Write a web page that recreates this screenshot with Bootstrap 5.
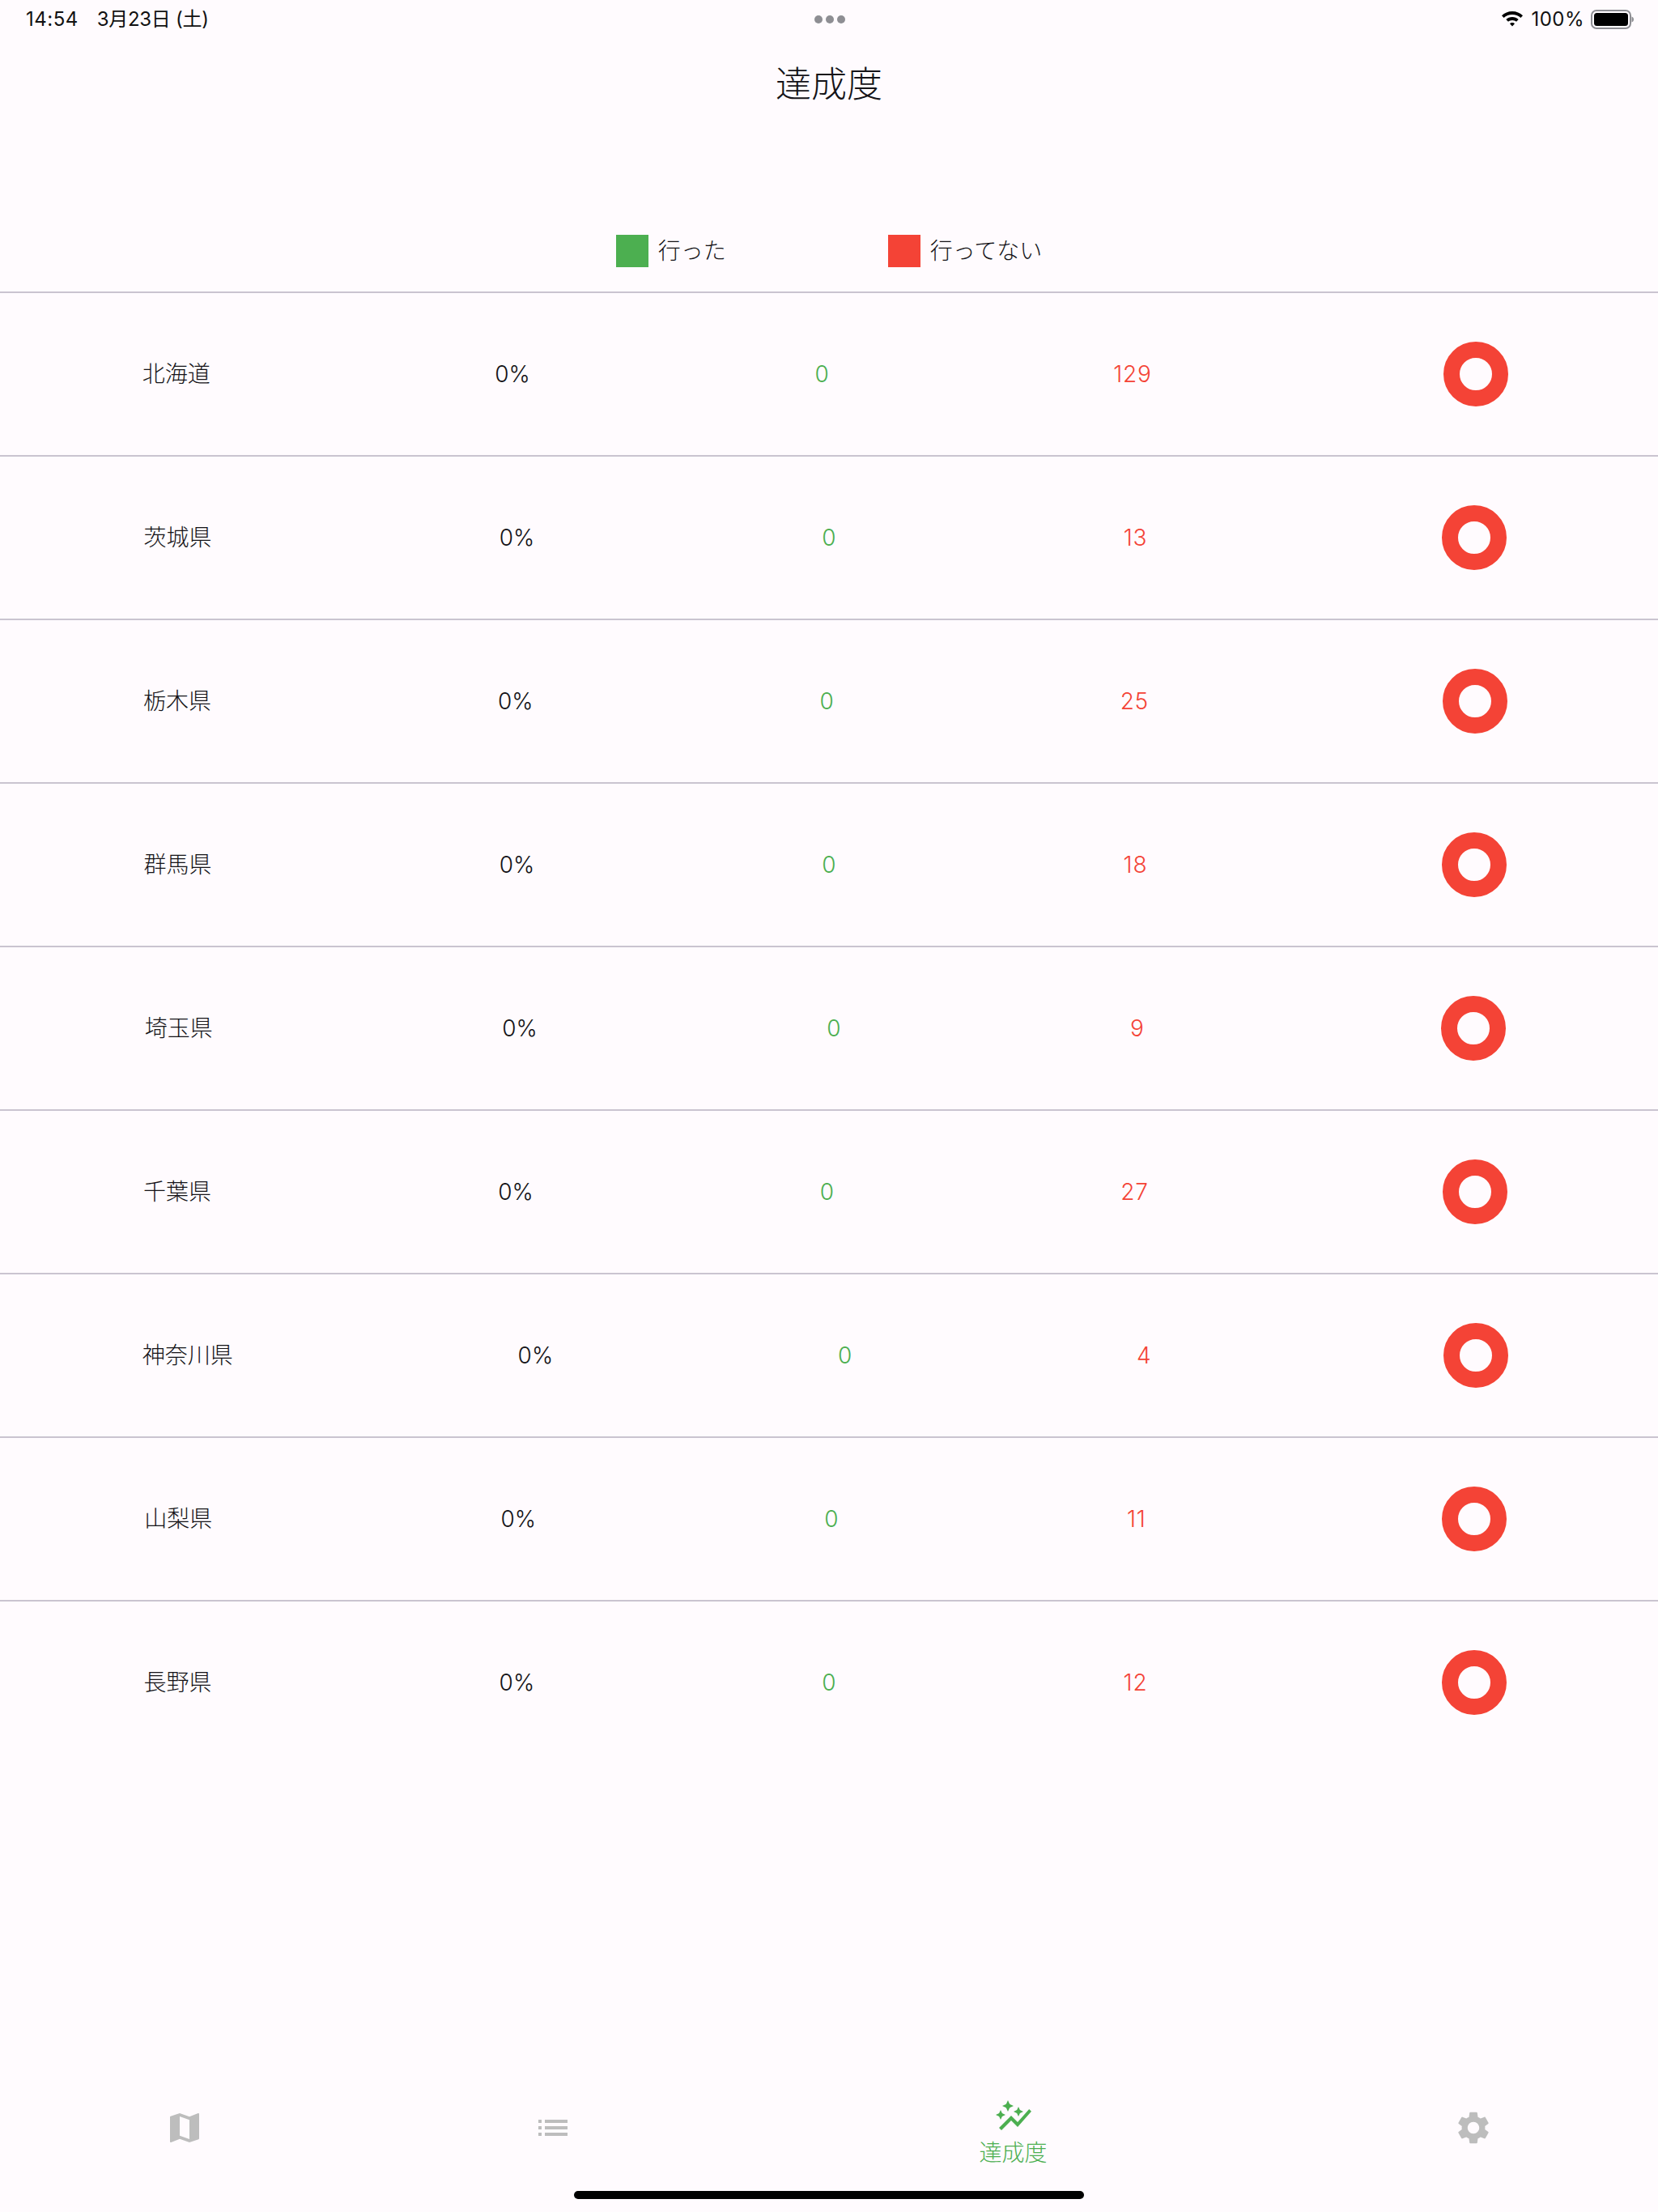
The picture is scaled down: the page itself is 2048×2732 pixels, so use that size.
<!DOCTYPE html>
<html lang="ja">
<head>
<meta charset="utf-8">
<title>達成度</title>
<link href="https://cdn.jsdelivr.net/npm/bootstrap@5.3.0/dist/css/bootstrap.min.css" rel="stylesheet">
<style>
html, body { background: #fffbfe; }
body { font-family: "Inter", "Noto Sans CJK JP", sans-serif; color: #141317; width: 2048px; }
.screen { min-height: 2732px; }
.status-bar { height: 48px; padding: 0 30px 0 32px; font-size: 24px; color: #111; }
.status-time { letter-spacing: 0.5px; }
.status-date { margin-left: 23px; letter-spacing: -0.3px; }
.status-pct { margin: 0 8px 0 9px; letter-spacing: 0.5px; }
.status-left, .status-right { width: 300px; }
.tri-dot { width: 10px; height: 10px; border-radius: 50%; background: #8e8e93; }
.page-title { height: 112px; font-size: 44px; font-weight: 300; }
.legend-bar { padding-top: 130px; padding-bottom: 30px; gap: 200px; font-size: 28px; font-weight: 300; line-height: 40px; }
.legend-item { gap: 12px; }
.swatch { width: 40px; height: 40px; }
.swatch-go { background: #4caf50; }
.swatch-no { background: #f44336; }
.stat-row { height: 202px; border-top: 2px solid #cac4d0; font-size: 28px; font-weight: 300; }
.val-go { color: #4caf50; }
.val-no { color: #f44336; letter-spacing: 0.8px; }
.ring-box { width: 98px; }
.ring { width: 80px; height: 80px; border-radius: 50%; border: 20px solid #f44336; }
.tab-bar { height: 120px; }
.tab-cell { flex: 2 1 0; color: #bdbdbd; }
.tab-cell.tab-active { flex: 3 1 0; color: #4caf50; padding-top: 14px; }
.tab-cell svg { width: 48px; height: 48px; fill: currentColor; display: block; }
.tab-label { font-size: 28px; font-weight: 300; line-height: 42px; }
.home-zone { height: 44px; padding-top: 18px; }
.home-bar { width: 630px; height: 10px; border-radius: 5px; background: #000; }
</style>
</head>
<body>
<div class="screen d-flex flex-column">
  <div class="status-bar d-flex align-items-center justify-content-between">
    <div class="status-left d-flex"><span class="status-time">14:54</span><span class="status-date">3月23日 (土)</span></div>
    <div class="d-flex gap-1 align-items-center"><span class="tri-dot"></span><span class="tri-dot"></span><span class="tri-dot"></span></div>
    <div class="status-right d-flex align-items-center justify-content-end">
      <svg width="28" height="20" viewBox="0 0 28 20" aria-hidden="true"><path d="M14 0C8.800 0 4.400 2 1 5.200l2.600 2.800C6.300 5.500 10 4 14 4s7.700 1.500 10.400 4L27 5.200C23.600 2 19.200 0 14 0zM14 7c-3 0-5.700 1.100-7.700 3l2.700 2.800c1.300-1.200 3-1.900 5-1.900s3.700.7 5 1.900l2.700-2.800c-2-1.900-4.700-3-7.700-3zM14 14c-1.200 0-2.300.5-3 1.200l3 3.300 3-3.300c-.7-.7-1.800-1.200-3-1.200z"/></svg>
      <span class="status-pct">100%</span>
      <svg width="53" height="24" viewBox="0 0 53 24" aria-hidden="true"><rect x="1" y="1" width="48" height="22" rx="6" fill="none" stroke="#8e8e93" stroke-width="2"/><rect x="4" y="4" width="42" height="16" rx="3.500"/><path d="M50.500 8.500c1.500.4 2.500 1.700 2.500 3.500s-1 3.100-2.500 3.500z" fill="#8e8e93"/></svg>
    </div>
  </div>

  <div class="page-title d-flex align-items-center justify-content-center">達成度</div>

  <div class="legend-bar d-flex justify-content-center">
    <div class="legend-item d-flex align-items-center"><span class="swatch swatch-go"></span><span>行った</span></div>
    <div class="legend-item d-flex align-items-center"><span class="swatch swatch-no"></span><span>行ってない</span></div>
  </div>

  <div class="stat-row d-flex align-items-center justify-content-around"><span>北海道</span><span>0%</span><span class="val-go">0</span><span class="val-no">129</span><span class="ring-box d-flex justify-content-center"><span class="ring"></span></span></div>
  <div class="stat-row d-flex align-items-center justify-content-around"><span>茨城県</span><span>0%</span><span class="val-go">0</span><span class="val-no">13</span><span class="ring-box d-flex justify-content-center"><span class="ring"></span></span></div>
  <div class="stat-row d-flex align-items-center justify-content-around"><span>栃木県</span><span>0%</span><span class="val-go">0</span><span class="val-no">25</span><span class="ring-box d-flex justify-content-center"><span class="ring"></span></span></div>
  <div class="stat-row d-flex align-items-center justify-content-around"><span>群馬県</span><span>0%</span><span class="val-go">0</span><span class="val-no">18</span><span class="ring-box d-flex justify-content-center"><span class="ring"></span></span></div>
  <div class="stat-row d-flex align-items-center justify-content-around"><span>埼玉県</span><span>0%</span><span class="val-go">0</span><span class="val-no">9</span><span class="ring-box d-flex justify-content-center"><span class="ring"></span></span></div>
  <div class="stat-row d-flex align-items-center justify-content-around"><span>千葉県</span><span>0%</span><span class="val-go">0</span><span class="val-no">27</span><span class="ring-box d-flex justify-content-center"><span class="ring"></span></span></div>
  <div class="stat-row d-flex align-items-center justify-content-around"><span>神奈川県</span><span>0%</span><span class="val-go">0</span><span class="val-no">4</span><span class="ring-box d-flex justify-content-center"><span class="ring"></span></span></div>
  <div class="stat-row d-flex align-items-center justify-content-around"><span>山梨県</span><span>0%</span><span class="val-go">0</span><span class="val-no">11</span><span class="ring-box d-flex justify-content-center"><span class="ring"></span></span></div>
  <div class="stat-row d-flex align-items-center justify-content-around"><span>長野県</span><span>0%</span><span class="val-go">0</span><span class="val-no">12</span><span class="ring-box d-flex justify-content-center"><span class="ring"></span></span></div>

  <div class="flex-grow-1"></div>

  <div class="tab-bar d-flex">
    <div class="tab-cell d-flex flex-column align-items-center justify-content-center">
      <svg viewBox="0 0 24 24" aria-hidden="true"><path d="M20.500 3l-.16.03L15 5.100 9 3 3.360 4.900c-.21.07-.36.25-.36.48V20.500c0 .28.22.5.5.5l.16-.03L9 18.900l6 2.100 5.640-1.900c.21-.07.36-.25.36-.48V3.500c0-.28-.22-.5-.5-.5zM15 19l-6-2.110V5l6 2.110V19z"/></svg>
    </div>
    <div class="tab-cell d-flex flex-column align-items-center justify-content-center">
      <svg viewBox="0 0 24 24" aria-hidden="true"><path d="M3 13h2v-2H3v2zm0 4h2v-2H3v2zm0-8h2V7H3v2zm4 4h14v-2H7v2zm0 4h14v-2H7v2zM7 7v2h14V7H7z"/></svg>
    </div>
    <div class="tab-cell tab-active d-flex flex-column align-items-center justify-content-center">
      <svg viewBox="0 0 24 24" aria-hidden="true"><path d="M14.060 9.940 12 9l2.060-.94L15 6l.94 2.060L18 9l-2.060.94L15 12zM4 14l.94-2.060L7 11l-2.060-.94L4 8l-.94 2.060L1 11l2.060.94zm4.500-5 1.090-2.410L12 5.500 9.590 4.410 8.500 2 7.410 4.410 5 5.500l2.410 1.090zm-4 11.500 6-6.010 4 4L23 8.930l-1.410-1.410-7.090 7.970-4-4L3 18.990z"/></svg>
      <span class="tab-label">達成度</span>
    </div>
    <div class="tab-cell d-flex flex-column align-items-center justify-content-center">
      <svg viewBox="0 0 24 24" aria-hidden="true"><path d="M19.140 12.940c.04-.3.060-.61.060-.94 0-.32-.02-.64-.07-.94l2.030-1.580c.18-.14.230-.41.120-.61l-1.920-3.320c-.12-.22-.37-.29-.59-.22l-2.390.96c-.5-.38-1.030-.7-1.620-.94l-.36-2.540c-.04-.24-.24-.41-.48-.41h-3.840c-.24 0-.43.170-.47.410l-.36 2.540c-.59.24-1.130.57-1.620.94l-2.390-.96c-.22-.08-.47 0-.59.220L2.740 8.870c-.12.210-.08.470.12.610l2.030 1.580c-.05.3-.09.630-.09.940s.02.640.07.94l-2.030 1.580c-.18.140-.23.410-.12.610l1.920 3.320c.12.220.37.290.59.220l2.390-.96c.5.38 1.030.7 1.620.94l.36 2.540c.05.24.24.410.48.410h3.840c.24 0 .44-.17.470-.41l.36-2.540c.59-.24 1.130-.56 1.620-.94l2.390.96c.22.08.47 0 .59-.22l1.920-3.320c.12-.22.07-.47-.12-.61l-2.010-1.580zM12 15.600c-1.980 0-3.600-1.620-3.600-3.600s1.620-3.600 3.600-3.600 3.600 1.620 3.600 3.600-1.620 3.600-3.600 3.600z"/></svg>
    </div>
  </div>

  <div class="home-zone d-flex justify-content-center"><div class="home-bar"></div></div>
</div>
<script src="https://cdn.jsdelivr.net/npm/bootstrap@5.3.0/dist/js/bootstrap.bundle.min.js"></script>
</body>
</html>
